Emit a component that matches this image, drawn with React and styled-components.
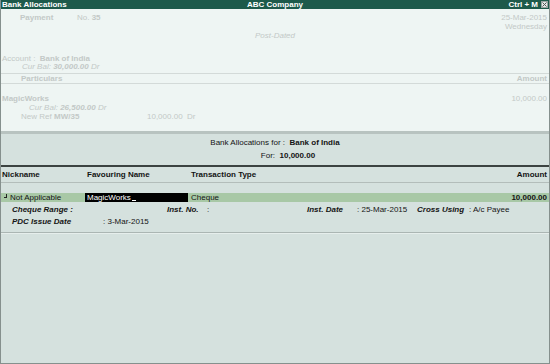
import React from "react";
import styled, { createGlobalStyle } from "styled-components";

const GlobalStyle = createGlobalStyle`
  html, body { margin: 0; padding: 0; background: #d5e1de; }
  body { font-family: "Liberation Sans", Arial, sans-serif; font-size: 8px; }
  * { box-sizing: border-box; }
`;

const Window = styled.div`
  width: 550px;
  height: 364px;
  display: flex;
  flex-direction: column;
  border-left: 1px solid #85908d;
  border-right: 1px solid #85908d;
  border-bottom: 1px solid #85908d;
  background: #d5e1de;
  overflow: hidden;
`;

const TitleBar = styled.div`
  height: 9px;
  flex: none;
  background: #1d5a4b;
  color: #ffffff;
  font-weight: bold;
  line-height: 9px;
  display: grid;
  grid-template-columns: 1fr auto 1fr;
  align-items: center;
  padding: 0 1px 0 1px;
`;

const TitleRight = styled.div`
  display: flex;
  justify-content: flex-end;
  align-items: center;
  gap: 3px;
`;

const CloseBox = styled.span`
  width: 7px;
  height: 7px;
  background: #e3e9e7;
  border: 1px solid #9aa5a2;
  display: flex;
  align-items: center;
  justify-content: center;
`;

const TopPanel = styled.div`
  flex: none;
  height: 125px;
  background: #eef5f3;
  color: #c3c9c7;
  border-bottom: 3px solid #b8c3c0;
  padding-top: 4px;
  display: flex;
  flex-direction: column;
`;

const VoucherHead = styled.div`
  height: 18px;
  display: flex;
  justify-content: space-between;
  padding: 0 2px 0 19px;
`;

const VoucherLeft = styled.div`
  display: grid;
  grid-template-columns: 57px auto;
  line-height: 10px;
  align-self: flex-start;
`;

const DateCol = styled.div`
  text-align: right;
  line-height: 9px;
`;

const Bold = styled.span`
  font-weight: bold;
`;

const Ital = styled.span`
  font-style: italic;
  font-weight: ${(p) => (p.$bold ? "bold" : "normal")};
`;

const PostDated = styled.div`
  height: 10px;
  line-height: 10px;
  text-align: center;
  font-style: italic;
`;

const FadedLines = styled.div`
  margin-top: ${(p) => p.$mt}px;
  line-height: ${(p) => p.$lh}px;
`;

const FadedLine = styled.div`
  padding-left: ${(p) => p.$indent || 1}px;
  padding-right: 2px;
  display: flex;
  justify-content: space-between;
`;

const RefLine = styled.div`
  display: grid;
  grid-template-columns: 33px 93px auto;
  padding-left: ${(p) => p.$indent}px;
`;

const ParticularsHead = styled.div`
  margin-top: 2px;
  border-top: 1px solid #d3dad8;
  border-bottom: 1px solid #d3dad8;
  height: 11px;
  line-height: 9px;
  font-weight: bold;
  display: flex;
  justify-content: space-between;
  padding: 0 2px 0 20px;
`;

const BottomPanel = styled.div`
  flex: 1;
  background: #d5e1de;
  color: #141414;
  display: flex;
  flex-direction: column;
  padding-top: 4px;
`;

const AllocLine = styled.div`
  line-height: 10px;
  text-align: center;
  margin-top: ${(p) => p.$mt || 0}px;
  padding-left: ${(p) => p.$shift || 0}px;
`;

const TableHead = styled.div`
  margin-top: 4px;
  border-top: 2px solid #3c4341;
  border-bottom: 1px solid #b3bdba;
  padding: 3px 0 2px;
  line-height: 10px;
  font-weight: bold;
  display: grid;
  grid-template-columns: 84px 106px 1fr auto;
`;

const HeadCell = styled.div`
  padding-left: ${(p) => p.$pl || 0}px;
  padding-right: ${(p) => p.$pr || 0}px;
`;

const SelRow = styled.div`
  margin-top: 10px;
  height: 9px;
  line-height: 9px;
  background: #a8c8a6;
  display: grid;
  grid-template-columns: 84px 106px 1fr auto;
`;

const NickCell = styled.div`
  display: flex;
  align-items: flex-start;
  padding-left: 3px;
  gap: 3px;
`;

const Mark = styled.span`
  width: 3px;
  height: 4px;
  margin-top: 1px;
  border-right: 1px solid #222;
  border-bottom: 1px solid #222;
  flex: none;
`;

const EditBox = styled.div`
  width: 103px;
  background: #000000;
  color: #ffffff;
  padding-left: 2px;
  display: flex;
  align-items: center;
`;

const Cursor = styled.span`
  display: inline-block;
  width: 4px;
  height: 7px;
  border-bottom: 1px solid #ffffff;
  margin-left: 1px;
`;

const AmountCell = styled.div`
  font-weight: bold;
  padding-right: 2px;
`;

const DetailGrid = styled.div`
  margin-top: 2px;
  padding-left: 11px;
  display: grid;
  grid-template-columns: 91px 64px 40px 100px 50px 60px 52px 1fr;
  grid-auto-rows: 12px;
  line-height: 12px;
  border-bottom: 1px solid #abb6b3;
  padding-bottom: 4px;
  box-shadow: 0 1px 0 #e6eeec;
`;

const Label = styled.div`
  font-weight: bold;
  font-style: italic;
`;

const Value = styled.div``;

export default function App() {
  return (
    <>
      <GlobalStyle />
      <Window>
        <TitleBar>
          <div>Bank Allocations</div>
          <div>ABC Company</div>
          <TitleRight>
            <span>Ctrl + M</span>
            <CloseBox>
              <svg width="5" height="5" viewBox="0 0 5 5">
                <path d="M0.5 0.5 L4.5 4.5 M4.5 0.5 L0.5 4.5" stroke="#555" strokeWidth="1" />
              </svg>
            </CloseBox>
          </TitleRight>
        </TitleBar>

        <TopPanel>
          <VoucherHead>
            <VoucherLeft>
              <Bold>Payment</Bold>
              <span>
                No. <Bold>35</Bold>
              </span>
            </VoucherLeft>
            <DateCol>
              <div>25-Mar-2015</div>
              <div>Wednesday</div>
            </DateCol>
          </VoucherHead>
          <PostDated>Post-Dated</PostDated>
          <FadedLines $mt={14} $lh={8}>
            <FadedLine $indent={1}>
              <span>
                Account :&nbsp;&nbsp;<Bold>Bank of India</Bold>
              </span>
            </FadedLine>
            <FadedLine $indent={21}>
              <span>
                <Ital>Cur Bal:</Ital> <Ital $bold>30,000.00</Ital> <Ital>Dr</Ital>
              </span>
            </FadedLine>
          </FadedLines>
          <ParticularsHead>
            <span>Particulars</span>
            <span>Amount</span>
          </ParticularsHead>
          <FadedLines $mt={10} $lh={9}>
            <FadedLine $indent={1}>
              <Bold>MagicWorks</Bold>
              <span>10,000.00</span>
            </FadedLine>
            <FadedLine $indent={28}>
              <span>
                <Ital>Cur Bal:</Ital> <Ital $bold>26,500.00</Ital> <Ital>Dr</Ital>
              </span>
            </FadedLine>
            <RefLine $indent={20}>
              <span>New Ref</span>
              <Bold>MW/35</Bold>
              <span>10,000.00&nbsp;&nbsp;Dr</span>
            </RefLine>
          </FadedLines>
        </TopPanel>

        <BottomPanel>
          <AllocLine>
            Bank Allocations for :&nbsp;&nbsp;<Bold>Bank of India</Bold>
          </AllocLine>
          <AllocLine $mt={3} $shift={26}>
            For:&nbsp;&nbsp;<Bold>10,000.00</Bold>
          </AllocLine>
          <TableHead>
            <HeadCell $pl={1}>Nickname</HeadCell>
            <HeadCell $pl={2}>Favouring Name</HeadCell>
            <HeadCell>Transaction Type</HeadCell>
            <HeadCell $pr={2}>Amount</HeadCell>
          </TableHead>
          <SelRow>
            <NickCell>
              <Mark />
              <span>Not Applicable</span>
            </NickCell>
            <EditBox>
              MagicWorks
              <Cursor />
            </EditBox>
            <div>Cheque</div>
            <AmountCell>10,000.00</AmountCell>
          </SelRow>
          <DetailGrid>
            <Label>Cheque Range :</Label>
            <Value />
            <Label>Inst. No.</Label>
            <Value>:</Value>
            <Label>Inst. Date</Label>
            <Value>: 25-Mar-2015</Value>
            <Label>Cross Using</Label>
            <Value>: A/c Payee</Value>
            <Label>PDC Issue Date</Label>
            <Value>: 3-Mar-2015</Value>
          </DetailGrid>
        </BottomPanel>
      </Window>
    </>
  );
}
